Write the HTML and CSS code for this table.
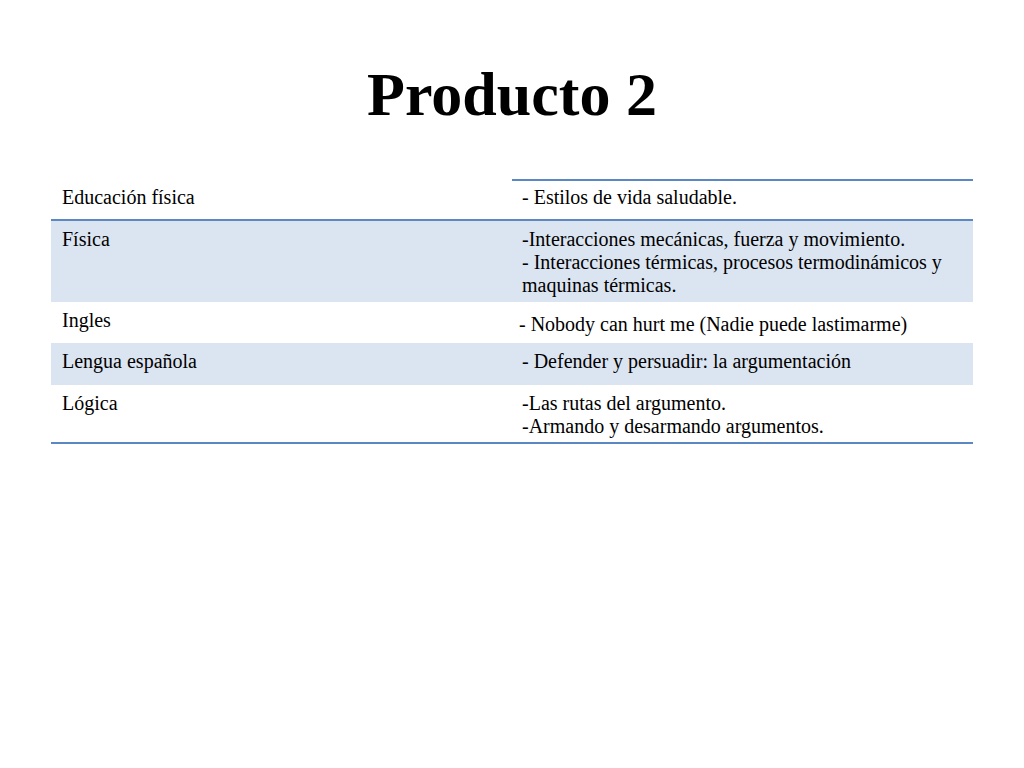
FILE: index.html
```html
<!DOCTYPE html>
<html lang="es">
<head>
<meta charset="utf-8">
<title>Producto 2</title>
<link rel="stylesheet" href="styles.css">
</head>
<body>
<h1 class="title">Producto 2</h1>
<table class="grid">
  <tr class="row r1">
    <td class="c1 head">Educación física</td>
    <td class="c2 head top">- Estilos de vida saludable.</td>
  </tr>
  <tr class="row r2 shade">
    <td class="c1">Física</td>
    <td class="c2">-Interacciones mecánicas, fuerza y movimiento.<br>- Interacciones térmicas, procesos termodinámicos y maquinas térmicas.</td>
  </tr>
  <tr class="row r3">
    <td class="c1">Ingles</td>
    <td class="c2 low">- Nobody can hurt me (Nadie puede lastimarme)</td>
  </tr>
  <tr class="row r4 shade">
    <td class="c1">Lengua española</td>
    <td class="c2">- Defender y persuadir: la argumentación</td>
  </tr>
  <tr class="row r5">
    <td class="c1 last">Lógica</td>
    <td class="c2 last">-Las rutas del argumento.<br>-Armando y desarmando argumentos.</td>
  </tr>
</table>
</body>
</html>
```

FILE: styles.css
```css
html, body {
  margin: 0;
  padding: 0;
  background: #ffffff;
}

body {
  width: 1024px;
  height: 768px;
  font-family: "Liberation Serif", "Times New Roman", serif;
  color: #000000;
}

.title {
  margin: 63px 0 0 0;
  font-size: 62px;
  line-height: 62px;
  font-weight: bold;
  text-align: center;
}

.grid {
  margin: 54px 0 0 51px;
  width: 922px;
  border-collapse: separate;
  border-spacing: 0;
  font-size: 20px;
  line-height: 23px;
}

.grid td {
  vertical-align: top;
  padding: 7px 10px 0 11px;
}

.grid .c1 {
  width: 461px;
  box-sizing: border-box;
}

.grid .c2 {
  padding-left: 10px;
}

.shade td {
  background: #dbe5f1;
}

.r1 { height: 42px; }
.r2 { height: 81px; }
.r3 { height: 41px; }
.r4 { height: 42px; }
.r5 { height: 59px; }

.grid .head {
  padding-top: 5px;
  border-top: 2px solid transparent;
  border-bottom: 2px solid #5b87c2;
}

.grid .head.top {
  border-top-color: #5b87c2;
}

.grid .low {
  padding-top: 11px;
  padding-left: 7px;
}

.grid .last {
  border-bottom: 2px solid #5b87c2;
}
```
